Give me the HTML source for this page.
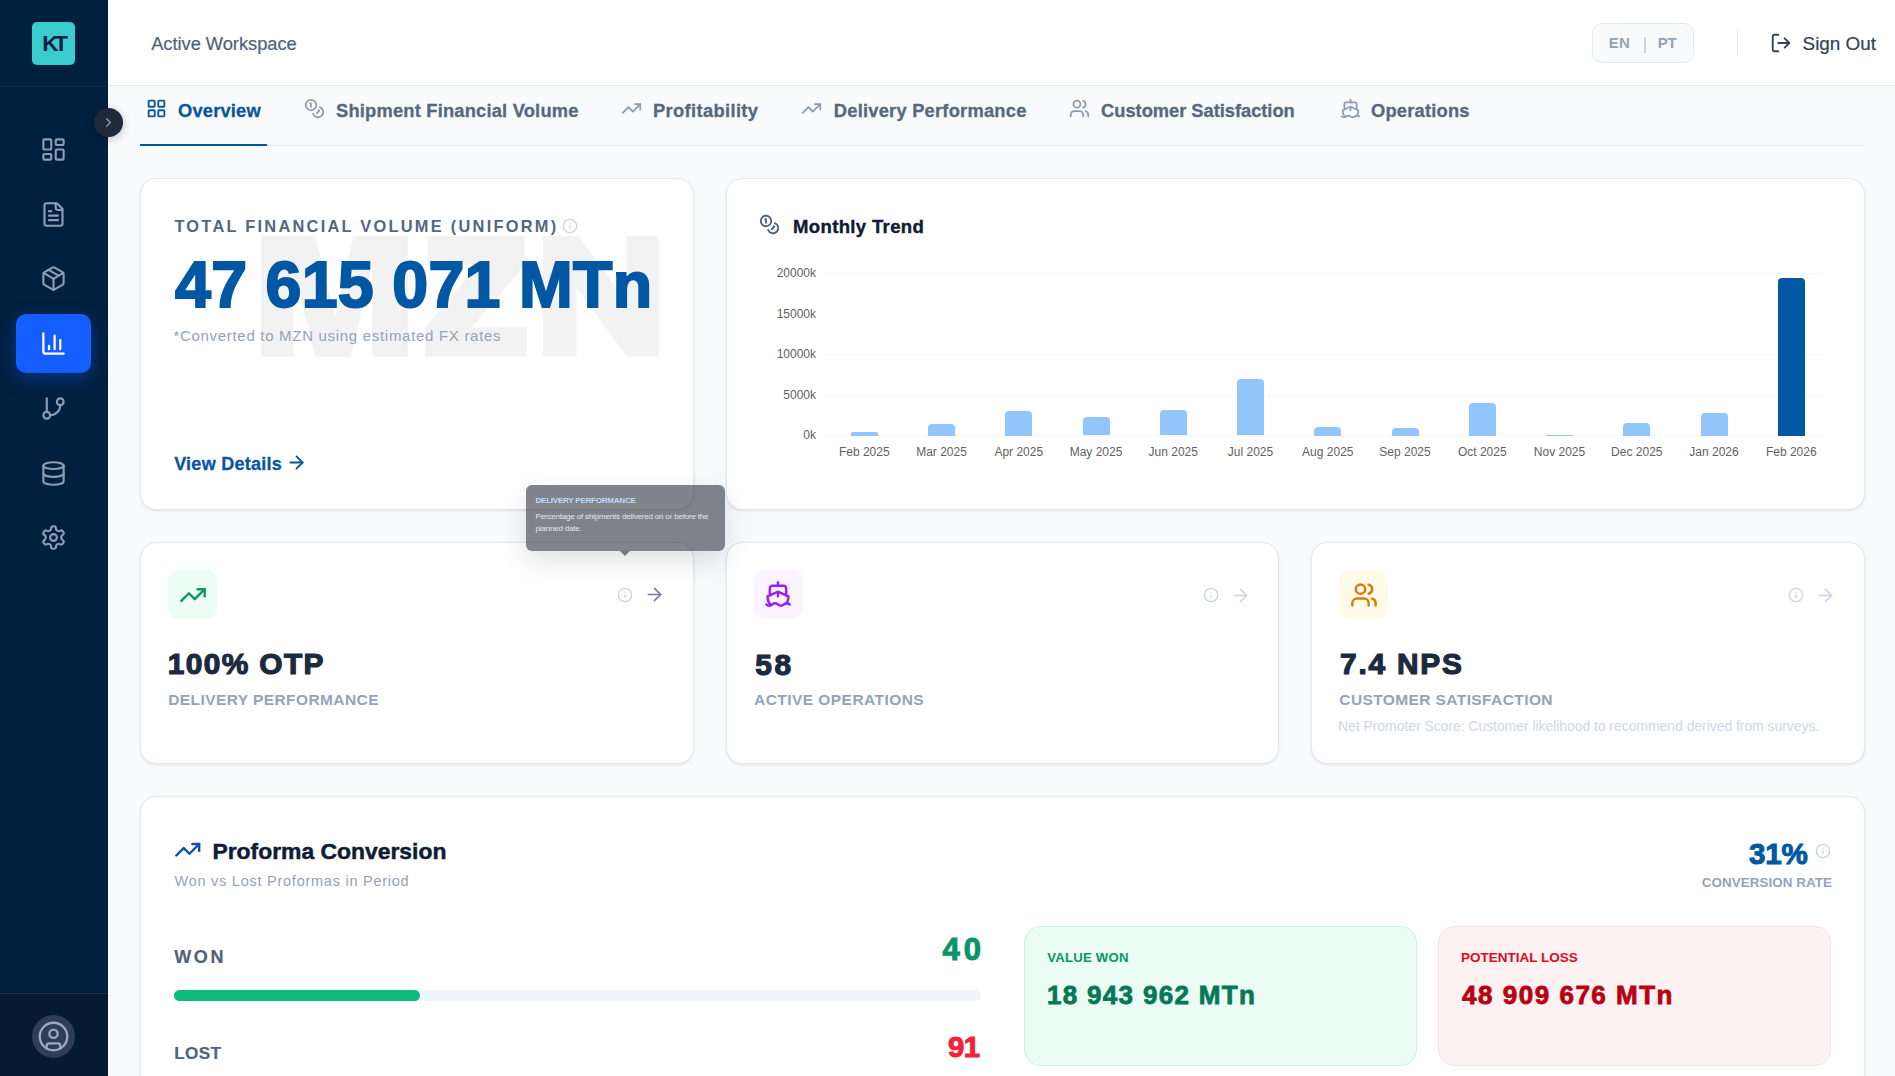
<!DOCTYPE html>
<html><head><meta charset="utf-8">
<style>
*{box-sizing:border-box;margin:0;padding:0}
html,body{width:1895px;height:1076px;overflow:hidden;background:#f8fafc;font-family:"Liberation Sans",sans-serif}
.abs{position:absolute}
svg{display:block}
.ic{fill:none;stroke:currentColor;stroke-width:2;stroke-linecap:round;stroke-linejoin:round}
.t{position:absolute;white-space:nowrap;line-height:1}
.card{position:absolute;background:#fff;border:1px solid #e3e8ef;border-radius:16px;box-shadow:0 1px 3px rgba(15,23,42,.07),0 1px 2px rgba(15,23,42,.03)}
.grid{position:absolute;left:827px;width:1000px;height:1px;background-image:linear-gradient(90deg,#edf1f6 50%,transparent 50%);background-size:8px 1px}
.ylab{position:absolute;right:1079px;font-size:12px;line-height:1;color:#5f5f5f;white-space:nowrap}
.xlab{position:absolute;top:445.7px;width:80px;text-align:center;font-size:12px;line-height:1;color:#5f5f5f;white-space:nowrap}
.bar{position:absolute;width:27px}
.ibox{position:absolute;top:570px;width:49px;height:49px;border-radius:10px}
</style></head><body>

<div class="abs" style="left:0;top:0;width:108px;height:1076px;background:#00203f"></div>
<div class="abs" style="left:32px;top:22px;width:43px;height:43px;border-radius:5px;background:#38cccc"></div>
<div class="t" style="left:42.3px;top:33.4px;font-size:22.5px;color:#00203f;font-weight:bold;letter-spacing:-4.3px">KT</div>
<div class="abs" style="left:0;top:86px;width:108px;height:1px;background:#0a2d55"></div>
<svg class="abs ic" style="left:40px;top:135.9px;width:27px;height:27px;color:#8e9cb6;stroke-width:1.9" viewBox="0 0 24 24"><rect width="7" height="9" x="3" y="3" rx="1"/><rect width="7" height="5" x="14" y="3" rx="1"/><rect width="7" height="9" x="14" y="12" rx="1"/><rect width="7" height="5" x="3" y="16" rx="1"/></svg>
<svg class="abs ic" style="left:40px;top:201.1px;width:27px;height:27px;color:#8e9cb6;stroke-width:1.9" viewBox="0 0 24 24"><path d="M15 2H6a2 2 0 0 0-2 2v16a2 2 0 0 0 2 2h12a2 2 0 0 0 2-2V7Z"/><path d="M14 2v4a2 2 0 0 0 2 2h4"/><path d="M10 9H8"/><path d="M16 13H8"/><path d="M16 17H8"/></svg>
<svg class="abs ic" style="left:40px;top:264.9px;width:27px;height:27px;color:#8e9cb6;stroke-width:1.9" viewBox="0 0 24 24"><path d="M11 21.73a2 2 0 0 0 2 0l7-4A2 2 0 0 0 21 16V8a2 2 0 0 0-1-1.73l-7-4a2 2 0 0 0-2 0l-7 4A2 2 0 0 0 3 8v8a2 2 0 0 0 1 1.73z"/><path d="M12 22V12"/><path d="m3.3 7 7.703 4.734a2 2 0 0 0 1.994 0L20.7 7"/><path d="m7.5 4.27 9 5.15"/></svg>
<svg class="abs ic" style="left:40px;top:395.2px;width:27px;height:27px;color:#8e9cb6;stroke-width:1.9" viewBox="0 0 24 24"><line x1="6" x2="6" y1="3" y2="15"/><circle cx="18" cy="6" r="3"/><circle cx="6" cy="18" r="3"/><path d="M18 9a9 9 0 0 1-9 9"/></svg>
<svg class="abs ic" style="left:40px;top:459.9px;width:27px;height:27px;color:#8e9cb6;stroke-width:1.9" viewBox="0 0 24 24"><ellipse cx="12" cy="5" rx="9" ry="3"/><path d="M3 5V19A9 3 0 0 0 21 19V5"/><path d="M3 12A9 3 0 0 0 21 12"/></svg>
<svg class="abs ic" style="left:40px;top:523.7px;width:27px;height:27px;color:#8e9cb6;stroke-width:1.9" viewBox="0 0 24 24"><path d="M12.22 2h-.44a2 2 0 0 0-2 2v.18a2 2 0 0 1-1 1.73l-.43.25a2 2 0 0 1-2 0l-.15-.08a2 2 0 0 0-2.73.73l-.22.38a2 2 0 0 0 .73 2.73l.15.1a2 2 0 0 1 1 1.72v.51a2 2 0 0 1-1 1.74l-.15.09a2 2 0 0 0-.73 2.73l.22.38a2 2 0 0 0 2.73.73l.15-.08a2 2 0 0 1 2 0l.43.25a2 2 0 0 1 1 1.73V20a2 2 0 0 0 2 2h.44a2 2 0 0 0 2-2v-.18a2 2 0 0 1 1-1.73l.43-.25a2 2 0 0 1 2 0l.15.08a2 2 0 0 0 2.73-.73l.22-.39a2 2 0 0 0-.73-2.73l-.15-.08a2 2 0 0 1-1-1.74v-.5a2 2 0 0 1 1-1.74l.15-.09a2 2 0 0 0 .73-2.73l-.22-.38a2 2 0 0 0-2.73-.73l-.15.08a2 2 0 0 1-2 0l-.43-.25a2 2 0 0 1-1-1.73V4a2 2 0 0 0-2-2z"/><circle cx="12" cy="12" r="3"/></svg>
<div class="abs" style="left:16px;top:314px;width:75px;height:59px;border-radius:10px;background:#165dff;box-shadow:0 6px 18px rgba(22,93,255,.35)"></div>
<svg class="abs ic" style="left:40px;top:329.9px;width:27px;height:27px;color:#ffffff;stroke-width:2" viewBox="0 0 24 24"><path d="M3 3v16a2 2 0 0 0 2 2h16"/><path d="M18 17V9"/><path d="M13 17V5"/><path d="M8 17v-3"/></svg>
<div class="abs" style="left:0;top:993px;width:108px;height:83px;background:#071a33;border-top:1px solid #262d3d"></div>
<div class="abs" style="left:32px;top:1015px;width:43px;height:43px;border-radius:50%;background:#2f3d56"></div>
<svg class="abs ic" style="left:37px;top:1020px;width:33px;height:33px;color:#9aa8c4;stroke-width:1.7" viewBox="0 0 24 24"><circle cx="12" cy="12" r="10"/><circle cx="12" cy="10" r="3"/><path d="M7 20.662V19a2 2 0 0 1 2-2h6a2 2 0 0 1 2 2v1.662"/></svg>
<div class="abs" style="left:94px;top:108px;width:29px;height:29px;border-radius:50%;background:#1e293b;box-shadow:0 2px 8px rgba(0,0,0,.25)"></div>
<svg class="abs ic" style="left:101px;top:115px;width:15px;height:15px;color:#8f9bb0;stroke-width:2" viewBox="0 0 24 24"><path d="m9 18 6-6-6-6"/></svg>
<div class="abs" style="left:108px;top:0;width:1787px;height:86px;background:#fff;border-bottom:1px solid #e2e8f0"></div>
<div class="t" style="left:151.2px;top:34.9px;font-size:18.3px;color:#4f627c;font-weight:normal;letter-spacing:-0.03px;-webkit-text-stroke:0.2px #4f627c">Active Workspace</div>
<div class="abs" style="left:1592px;top:23px;width:102px;height:40px;border:1px solid #e2e8f0;border-radius:10px;background:#f8fafc"></div>
<div class="t" style="left:1608.8px;top:35px;font-size:15px;color:#94a3b8;font-weight:bold;letter-spacing:0.2px">EN</div>
<div class="abs" style="left:1644px;top:37px;width:1.5px;height:16px;background:#cbd5e1"></div>
<div class="t" style="left:1657.8px;top:35px;font-size:15px;color:#94a3b8;font-weight:bold;letter-spacing:-0.3px">PT</div>
<div class="abs" style="left:1737px;top:29px;width:1px;height:27px;background:#e2e8f0"></div>
<svg class="abs ic" style="left:1770.2px;top:32px;width:22px;height:22px;color:#334155;stroke-width:2" viewBox="0 0 24 24"><path d="M9 21H5a2 2 0 0 1-2-2V5a2 2 0 0 1 2-2h4"/><path d="m16 17 5-5-5-5"/><path d="M21 12H9"/></svg>
<div class="t" style="left:1802.6px;top:34.6px;font-size:18.9px;color:#334155;font-weight:normal;letter-spacing:-0.03px;-webkit-text-stroke:0.2px #334155">Sign Out</div>
<div class="abs" style="left:140px;top:145px;width:1724px;height:1px;background:#e2e8f0"></div>
<div class="abs" style="left:140px;top:144px;width:127px;height:2px;background:#0b559f"></div>
<svg class="abs ic" style="left:146.2px;top:98.2px;width:21px;height:21px;color:#0b559f;stroke-width:2.1" viewBox="0 0 24 24"><rect width="7" height="7" x="3" y="3" rx="1"/><rect width="7" height="7" x="14" y="3" rx="1"/><rect width="7" height="7" x="14" y="14" rx="1"/><rect width="7" height="7" x="3" y="14" rx="1"/></svg>
<div class="t" style="left:178.0px;top:101.7px;font-size:18.3px;color:#0b559f;font-weight:bold;letter-spacing:0.2px;-webkit-text-stroke:0.3px #0b559f">Overview</div>
<svg class="abs ic" style="left:304.1px;top:98.1px;width:21px;height:21px;color:#8c9bb3;stroke-width:2" viewBox="0 0 24 24"><circle cx="8" cy="8" r="6"/><path d="M18.09 10.37A6 6 0 1 1 10.34 18"/><path d="M7 6h1v4"/><path d="m16.71 13.88.7.71-2.82 2.82"/></svg>
<div class="t" style="left:336.0px;top:101.7px;font-size:18.3px;color:#566781;font-weight:bold;letter-spacing:0.21px;-webkit-text-stroke:0.3px #566781">Shipment Financial Volume</div>
<svg class="abs ic" style="left:621px;top:98px;width:21px;height:21px;color:#8c9bb3;stroke-width:2" viewBox="0 0 24 24"><polyline points="22 7 13.5 15.5 8.5 10.5 2 17"/><polyline points="16 7 22 7 22 13"/></svg>
<div class="t" style="left:653.0px;top:101.7px;font-size:18.3px;color:#566781;font-weight:bold;letter-spacing:0.37px;-webkit-text-stroke:0.3px #566781">Profitability</div>
<svg class="abs ic" style="left:800.9px;top:98px;width:21px;height:21px;color:#8c9bb3;stroke-width:2" viewBox="0 0 24 24"><polyline points="22 7 13.5 15.5 8.5 10.5 2 17"/><polyline points="16 7 22 7 22 13"/></svg>
<div class="t" style="left:833.8px;top:101.7px;font-size:18.3px;color:#566781;font-weight:bold;letter-spacing:0.24px;-webkit-text-stroke:0.3px #566781">Delivery Performance</div>
<svg class="abs ic" style="left:1069.1px;top:98.2px;width:21px;height:21px;color:#8c9bb3;stroke-width:2" viewBox="0 0 24 24"><path d="M16 21v-2a4 4 0 0 0-4-4H6a4 4 0 0 0-4 4v2"/><circle cx="9" cy="7" r="4"/><path d="M22 21v-2a4 4 0 0 0-3-3.87"/><path d="M16 3.13a4 4 0 0 1 0 7.75"/></svg>
<div class="t" style="left:1101.1px;top:101.7px;font-size:18.3px;color:#566781;font-weight:bold;letter-spacing:-0.02px;-webkit-text-stroke:0.3px #566781">Customer Satisfaction</div>
<svg class="abs ic" style="left:1339.5px;top:98px;width:21px;height:21px;color:#8c9bb3;stroke-width:2" viewBox="0 0 24 24"><path d="M12 10.189V14"/><path d="M12 2v3"/><path d="M19 13V7a2 2 0 0 0-2-2H7a2 2 0 0 0-2 2v6"/><path d="M19.38 20A11.6 11.6 0 0 0 21 14l-8.188-3.639a2 2 0 0 0-1.624 0L3 14a11.6 11.6 0 0 0 2.81 7.76"/><path d="M2 21c.6.5 1.2 1 2.5 1 2.5 0 2.5-2 5-2 1.3 0 1.9.5 2.5 1s1.2 1 2.5 1c2.5 0 2.5-2 5-2 1.3 0 1.9.5 2.5 1"/></svg>
<div class="t" style="left:1371.0px;top:101.7px;font-size:18.3px;color:#566781;font-weight:bold;letter-spacing:0.22px;-webkit-text-stroke:0.3px #566781">Operations</div>
<div class="card" style="left:140px;top:178px;width:554px;height:332px"></div>
<svg class="abs" style="left:0;top:0;width:700px;height:400px" viewBox="0 0 700 400"><g fill="#f2f2f2">
<polygon points="261,236 315.2,236 335.3,316.6 353.5,236 407.8,236 407.8,356.7 372.3,356.7 372.3,266.4 350.4,356.7 315.2,356.7 293.3,266.4 293.3,356.7 261,356.7"/>
<polygon points="427.8,236 524.7,236 524.7,265 471.5,327.6 526.7,327.6 526.7,356.6 425,356.6 425,327.6 478,265 427.8,265"/>
<polygon points="542.9,236 578.5,236 626.3,301 626.3,236 658.6,236 658.6,356.6 627,356.6 576.5,287.9 576.5,356.6 542.9,356.6"/>
</g></svg>
<div class="t" style="left:174.4px;top:218.4px;font-size:16.4px;color:#55667f;font-weight:bold;letter-spacing:2.25px">TOTAL FINANCIAL VOLUME (UNIFORM)</div>
<svg class="abs ic" style="left:562px;top:217.5px;width:16px;height:16px;color:#cbd5e1;stroke-width:2" viewBox="0 0 24 24"><circle cx="12" cy="12" r="10"/><path d="M12 16v-4"/><path d="M12 8h.01"/></svg>
<div class="t" style="left:175.0px;top:253.0px;font-size:64.5px;color:#0057a3;font-weight:bold;letter-spacing:0.29px;-webkit-text-stroke:2px #0057a3">47 615 071 MTn</div>
<div class="t" style="left:173.4px;top:328.0px;font-size:15px;color:#94a3b8;font-weight:normal;letter-spacing:0.7px">*Converted to MZN using estimated FX rates</div>
<div class="t" style="left:174.2px;top:454.9px;font-size:18px;color:#0b559f;font-weight:bold;letter-spacing:0.25px;-webkit-text-stroke:0.3px #0b559f">View Details</div>
<svg class="abs ic" style="left:286.1px;top:452.3px;width:21px;height:21px;color:#0b559f;stroke-width:2.1" viewBox="0 0 24 24"><path d="M5 12h14"/><path d="m12 5 7 7-7 7"/></svg>
<div class="card" style="left:726px;top:178px;width:1139px;height:332px"></div>
<svg class="abs ic" style="left:759.1px;top:214.1px;width:21px;height:21px;color:#52627c;stroke-width:2.1" viewBox="0 0 24 24"><circle cx="8" cy="8" r="6"/><path d="M18.09 10.37A6 6 0 1 1 10.34 18"/><path d="M7 6h1v4"/><path d="m16.71 13.88.7.71-2.82 2.82"/></svg>
<div class="t" style="left:793.0px;top:218.1px;font-size:18.55px;color:#0f1c33;font-weight:bold;letter-spacing:0.35px;-webkit-text-stroke:0.4px #0f1c33">Monthly Trend</div>
<div class="grid" style="top:273px"></div>
<div class="grid" style="top:354px"></div>
<div class="grid" style="top:395px"></div>
<div class="grid" style="top:435px"></div>
<div class="ylab" style="top:267.2px">20000k</div>
<div class="ylab" style="top:307.9px">15000k</div>
<div class="ylab" style="top:348.4px">10000k</div>
<div class="ylab" style="top:388.9px">5000k</div>
<div class="ylab" style="top:428.9px">0k</div>
<div class="bar" style="left:850.8px;top:431.5px;height:4px;background:#93c5fd;border-radius:2.0px 2.0px 0 0"></div>
<div class="xlab" style="left:824.3px">Feb 2025</div>
<div class="bar" style="left:928.0px;top:424.0px;height:11.5px;background:#93c5fd;border-radius:4.0px 4.0px 0 0"></div>
<div class="xlab" style="left:901.5px">Mar 2025</div>
<div class="bar" style="left:1005.3px;top:411.0px;height:24.5px;background:#93c5fd;border-radius:4.0px 4.0px 0 0"></div>
<div class="xlab" style="left:978.8px">Apr 2025</div>
<div class="bar" style="left:1082.5px;top:416.9px;height:18.6px;background:#93c5fd;border-radius:4.0px 4.0px 0 0"></div>
<div class="xlab" style="left:1056.0px">May 2025</div>
<div class="bar" style="left:1159.8px;top:409.7px;height:25.8px;background:#93c5fd;border-radius:4.0px 4.0px 0 0"></div>
<div class="xlab" style="left:1133.3px">Jun 2025</div>
<div class="bar" style="left:1237.0px;top:378.8px;height:56.7px;background:#93c5fd;border-radius:4.0px 4.0px 0 0"></div>
<div class="xlab" style="left:1210.5px">Jul 2025</div>
<div class="bar" style="left:1314.3px;top:426.5px;height:9px;background:#93c5fd;border-radius:4.0px 4.0px 0 0"></div>
<div class="xlab" style="left:1287.8px">Aug 2025</div>
<div class="bar" style="left:1391.5px;top:428.0px;height:7.5px;background:#93c5fd;border-radius:3.8px 3.8px 0 0"></div>
<div class="xlab" style="left:1365.0px">Sep 2025</div>
<div class="bar" style="left:1468.8px;top:402.5px;height:33px;background:#93c5fd;border-radius:4.0px 4.0px 0 0"></div>
<div class="xlab" style="left:1442.3px">Oct 2025</div>
<div class="bar" style="left:1546.0px;top:434.8px;height:0.7px;background:#93c5fd;border-radius:0.0px 0.0px 0 0"></div>
<div class="xlab" style="left:1519.5px">Nov 2025</div>
<div class="bar" style="left:1623.3px;top:423.0px;height:12.5px;background:#93c5fd;border-radius:4.0px 4.0px 0 0"></div>
<div class="xlab" style="left:1596.8px">Dec 2025</div>
<div class="bar" style="left:1700.5px;top:412.5px;height:23px;background:#93c5fd;border-radius:4.0px 4.0px 0 0"></div>
<div class="xlab" style="left:1674.0px">Jan 2026</div>
<div class="bar" style="left:1777.8px;top:277.5px;height:158px;background:#0057a3;border-radius:4.0px 4.0px 0 0"></div>
<div class="xlab" style="left:1751.3px">Feb 2026</div>
<div class="card" style="left:140px;top:542px;width:554px;height:222px"></div>
<div class="ibox" style="left:168px;background:#ebfdf4"></div>
<svg class="abs ic" style="left:178.7px;top:580.5px;width:28px;height:28px;color:#0b9a64;stroke-width:2.1" viewBox="0 0 24 24"><polyline points="22 7 13.5 15.5 8.5 10.5 2 17"/><polyline points="16 7 22 7 22 13"/></svg>
<svg class="abs ic" style="left:617px;top:586.5px;width:16px;height:16px;color:#cbd5e1;stroke-width:2" viewBox="0 0 24 24"><circle cx="12" cy="12" r="10"/><path d="M12 16v-4"/><path d="M12 8h.01"/></svg>
<svg class="abs ic" style="left:644.2px;top:584.3px;width:21px;height:21px;color:#71819b;stroke-width:1.9" viewBox="0 0 24 24"><path d="M5 12h14"/><path d="m12 5 7 7-7 7"/></svg>
<div class="t" style="left:167.8px;top:648.7px;font-size:29.86px;color:#1c2a40;font-weight:bold;letter-spacing:1.37px;-webkit-text-stroke:1.2px #1c2a40">100% OTP</div>
<div class="t" style="left:168.2px;top:691.9px;font-size:15.5px;color:#94a3b8;font-weight:bold;letter-spacing:0.42px">DELIVERY PERFORMANCE</div>
<div class="card" style="left:726px;top:542px;width:553px;height:222px"></div>
<div class="ibox" style="left:754px;background:#fbf4ff"></div>
<svg class="abs ic" style="left:763.8px;top:580.0px;width:28px;height:28px;color:#9a1ff0;stroke-width:2.1" viewBox="0 0 24 24"><path d="M12 10.189V14"/><path d="M12 2v3"/><path d="M19 13V7a2 2 0 0 0-2-2H7a2 2 0 0 0-2 2v6"/><path d="M19.38 20A11.6 11.6 0 0 0 21 14l-8.188-3.639a2 2 0 0 0-1.624 0L3 14a11.6 11.6 0 0 0 2.81 7.76"/><path d="M2 21c.6.5 1.2 1 2.5 1 2.5 0 2.5-2 5-2 1.3 0 1.9.5 2.5 1s1.2 1 2.5 1c2.5 0 2.5-2 5-2 1.3 0 1.9.5 2.5 1"/></svg>
<svg class="abs ic" style="left:1203px;top:586.5px;width:16px;height:16px;color:#cbd5e1;stroke-width:2" viewBox="0 0 24 24"><circle cx="12" cy="12" r="10"/><path d="M12 16v-4"/><path d="M12 8h.01"/></svg>
<svg class="abs ic" style="left:1229.5px;top:584.5px;width:21px;height:21px;color:#cbd5e1;stroke-width:1.9" viewBox="0 0 24 24"><path d="M5 12h14"/><path d="m12 5 7 7-7 7"/></svg>
<div class="t" style="left:755.3px;top:649.5px;font-size:29.9px;color:#1c2a40;font-weight:bold;letter-spacing:2.5px;-webkit-text-stroke:1.2px #1c2a40">58</div>
<div class="t" style="left:754.0px;top:691.9px;font-size:15.5px;color:#94a3b8;font-weight:bold;letter-spacing:0.45px">ACTIVE OPERATIONS</div>
<div class="card" style="left:1311px;top:542px;width:554px;height:222px"></div>
<div class="ibox" style="left:1339px;background:#fffbea"></div>
<svg class="abs ic" style="left:1349.5px;top:580.5px;width:28px;height:28px;color:#dd7a0c;stroke-width:2.1" viewBox="0 0 24 24"><path d="M16 21v-2a4 4 0 0 0-4-4H6a4 4 0 0 0-4 4v2"/><circle cx="9" cy="7" r="4"/><path d="M22 21v-2a4 4 0 0 0-3-3.87"/><path d="M16 3.13a4 4 0 0 1 0 7.75"/></svg>
<svg class="abs ic" style="left:1788px;top:586.5px;width:16px;height:16px;color:#cbd5e1;stroke-width:2" viewBox="0 0 24 24"><circle cx="12" cy="12" r="10"/><path d="M12 16v-4"/><path d="M12 8h.01"/></svg>
<svg class="abs ic" style="left:1815.2px;top:584.5px;width:21px;height:21px;color:#cbd5e1;stroke-width:1.9" viewBox="0 0 24 24"><path d="M5 12h14"/><path d="m12 5 7 7-7 7"/></svg>
<div class="t" style="left:1340.1px;top:648.7px;font-size:29.86px;color:#1c2a40;font-weight:bold;letter-spacing:1.75px;-webkit-text-stroke:1.2px #1c2a40">7.4 NPS</div>
<div class="t" style="left:1339.3px;top:691.9px;font-size:15.5px;color:#94a3b8;font-weight:bold;letter-spacing:0.4px">CUSTOMER SATISFACTION</div>
<div class="t" style="left:1338.0px;top:719.3px;font-size:14.05px;color:#cfd8e3;font-weight:normal;letter-spacing:-0.08px">Net Promoter Score: Customer likelihood to recommend derived from surveys.</div>
<div class="abs" style="left:526px;top:485px;width:199px;height:66px;border-radius:6px;background:rgba(40,46,58,.59);box-shadow:0 10px 28px rgba(15,23,42,.13)"></div>
<div class="abs" style="left:620px;top:551px;width:0;height:0;border-left:5.5px solid transparent;border-right:5.5px solid transparent;border-top:5.5px solid rgba(40,46,58,.6)"></div>
<div class="t" style="left:535.5px;top:496.9px;font-size:8px;color:#bfdbfe;font-weight:bold;letter-spacing:-0.22px">DELIVERY PERFORMANCE</div>
<div class="t" style="left:535.5px;top:510.7px;width:185px;white-space:normal;font-size:8px;line-height:12.8px;color:#e2e8f0;letter-spacing:-0.18px">Percentage of shipments delivered on or before the planned date.</div>
<div class="card" style="left:140px;top:796px;width:1725px;height:330px"></div>
<svg class="abs ic" style="left:173.9px;top:836.2px;width:27.5px;height:27.5px;color:#0b559f;stroke-width:2.1" viewBox="0 0 24 24"><polyline points="22 7 13.5 15.5 8.5 10.5 2 17"/><polyline points="16 7 22 7 22 13"/></svg>
<div class="t" style="left:212.4px;top:839.8px;font-size:22.9px;color:#0f1c33;font-weight:bold;letter-spacing:0px;-webkit-text-stroke:0.5px #0f1c33">Proforma Conversion</div>
<div class="t" style="left:174.5px;top:874.3px;font-size:14.5px;color:#94a3b8;font-weight:normal;letter-spacing:0.75px">Won vs Lost Proformas in Period</div>
<div class="t" style="left:1749.0px;top:838.8px;font-size:29.57px;color:#0057a3;font-weight:bold;letter-spacing:-0.23px;-webkit-text-stroke:1px #0057a3">31%</div>
<svg class="abs ic" style="left:1815px;top:843px;width:16px;height:16px;color:#cbd5e1;stroke-width:2" viewBox="0 0 24 24"><circle cx="12" cy="12" r="10"/><path d="M12 16v-4"/><path d="M12 8h.01"/></svg>
<div class="t" style="left:1701.8px;top:876.4px;font-size:13.44px;color:#94a3b8;font-weight:bold;letter-spacing:0.04px">CONVERSION RATE</div>
<div class="t" style="left:174.2px;top:948.1px;font-size:18px;color:#52627c;font-weight:bold;letter-spacing:2.6px;-webkit-text-stroke:0.2px #52627c">WON</div>
<div class="t" style="left:942.5px;top:934.2px;font-size:31px;color:#079669;font-weight:bold;letter-spacing:4px;-webkit-text-stroke:1px #079669">40</div>
<div class="abs" style="left:174px;top:990px;width:807px;height:11px;border-radius:6px;background:#f1f5f9"></div>
<div class="abs" style="left:174px;top:990px;width:246px;height:11px;border-radius:6px;background:#0fbb7c"></div>
<div class="t" style="left:174.3px;top:1045.3px;font-size:17.2px;color:#52627c;font-weight:bold;letter-spacing:0.27px;-webkit-text-stroke:0.2px #52627c">LOST</div>
<div class="t" style="left:948.0px;top:1032.0px;font-size:29.3px;color:#f02438;font-weight:bold;letter-spacing:-0.6px;-webkit-text-stroke:1px #f02438">91</div>
<div class="abs" style="left:1024px;top:926px;width:393px;height:140px;border-radius:16px;background:#eafcf3;border:1px solid #c9f5de"></div>
<div class="t" style="left:1047.2px;top:951.3px;font-size:13.2px;color:#079669;font-weight:bold;letter-spacing:0.21px">VALUE WON</div>
<div class="t" style="left:1046.9px;top:981.5px;font-size:26px;color:#047857;font-weight:bold;letter-spacing:1.33px;-webkit-text-stroke:0.8px #047857">18 943 962 MTn</div>
<div class="abs" style="left:1438px;top:926px;width:393px;height:140px;border-radius:16px;background:#fdf1f2;border:1px solid #fde0e2"></div>
<div class="t" style="left:1460.9px;top:951.0px;font-size:13.5px;color:#de0b1e;font-weight:bold;letter-spacing:0.0px">POTENTIAL LOSS</div>
<div class="t" style="left:1462.1px;top:981.9px;font-size:26px;color:#b90010;font-weight:bold;letter-spacing:1.51px;-webkit-text-stroke:0.8px #b90010">48 909 676 MTn</div>
</body></html>
